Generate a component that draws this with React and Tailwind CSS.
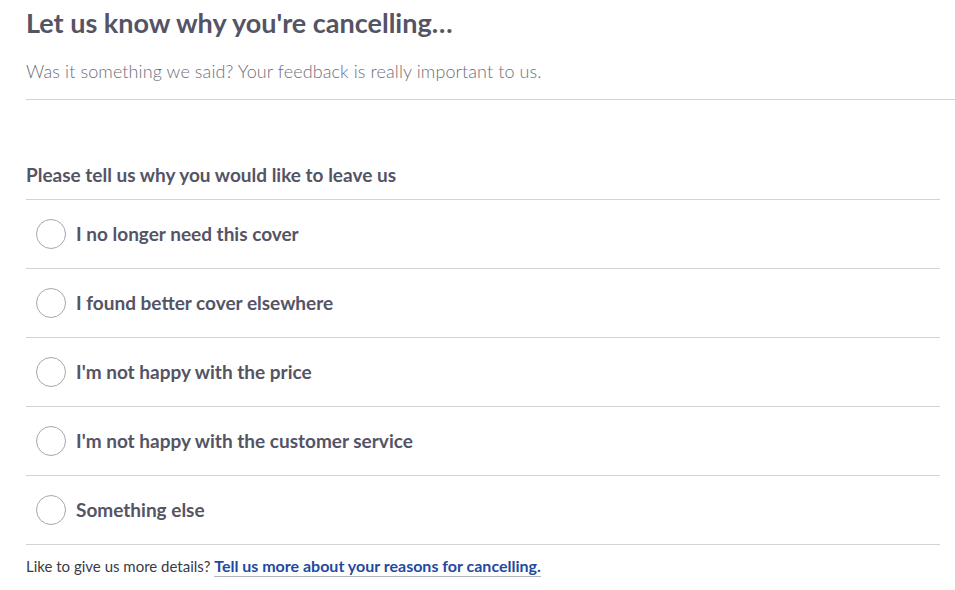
export default function App() {
  const options = [
    "I no longer need this cover",
    "I found better cover elsewhere",
    "I'm not happy with the price",
    "I'm not happy with the customer service",
    "Something else",
  ];
  return (
    <div className="min-h-[590px] bg-white pl-[26px] text-[#545465]" style={{ fontFamily: "Lato, 'Liberation Sans', sans-serif" }}>
      <div className="border-b border-[#d3d3d6] pt-[6px] pb-[16px]">
        <h1 className="text-[27px] font-bold leading-[34px] text-[#545465]">Let us know why you're cancelling…</h1>
        <p className="mt-[19px] text-[18px] font-light leading-[24px] tracking-[0.1px] text-[#6e6e78]">Was it something we said? Your feedback is really important to us.</p>
      </div>
      <div className="w-[914px] pt-[62px]">
        <h2 className="text-[19px] font-bold leading-[26px] pb-[11px] border-b border-[#d3d3d6]">Please tell us why you would like to leave us</h2>
        {options.map((o) => (
          <label key={o} className="flex h-[69px] items-center border-b border-[#d3d3d6] pl-[10px]">
            <span className="h-[30px] w-[30px] shrink-0 rounded-full border border-[#a8a8ad] bg-white"></span>
            <span className="ml-[10px] text-[19px] font-bold text-[#545465]">{o}</span>
          </label>
        ))}
        <p className="mt-[10px] text-[15px] leading-[22px] text-[#3a3a45]">
          Like to give us more details?{" "}
          <a className="text-[16px] font-bold text-[#1f4aa0] border-b border-[#b5b5bd] pb-[1px]">Tell us more about your reasons for cancelling.</a>
        </p>
      </div>
    </div>
  );
}
